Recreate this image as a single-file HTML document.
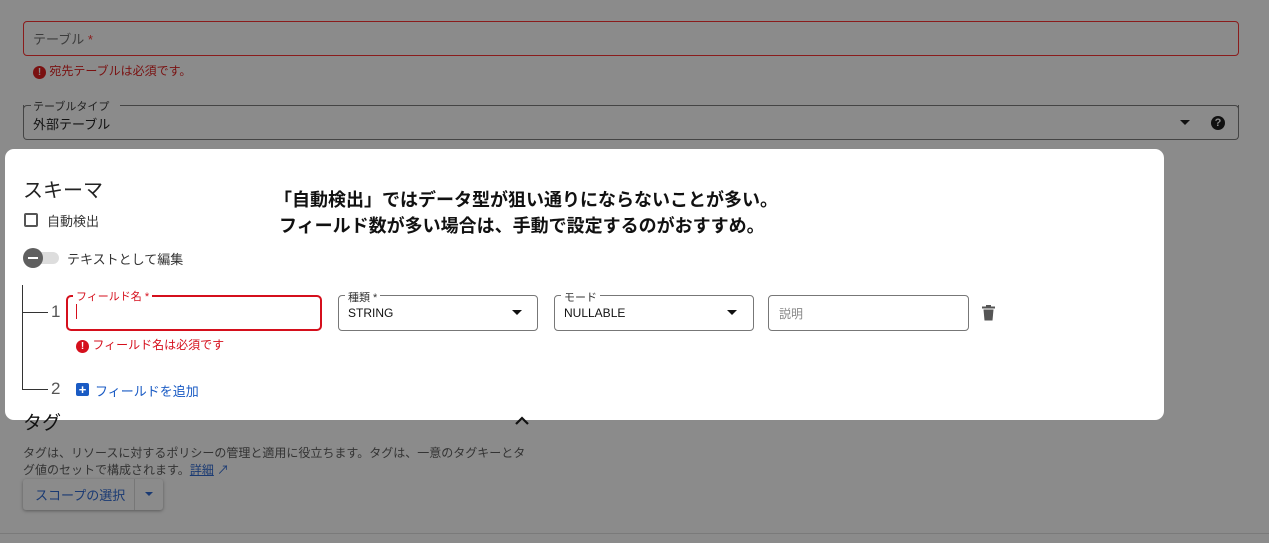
<!DOCTYPE html>
<html><head><meta charset="utf-8"><style>
*{box-sizing:border-box;margin:0;padding:0}
body{width:1269px;height:543px;background:#8b8b8b;font-family:"Liberation Sans","Noto Sans CJK JP",sans-serif;position:relative;overflow:hidden;color:#1f1f1f}
.a{position:absolute;white-space:nowrap}
.box{position:absolute;border:1px solid;border-radius:4px}
.ic{display:inline-block;width:13px;height:13px;border-radius:50%;font-size:10px;text-align:center;line-height:13px;font-weight:bold;vertical-align:0px}
</style></head><body>
<div class="box" style="left:23px;top:21px;width:1216px;height:35px;border-color:#8a1c1c"></div>
<div class="a" style="left:33px;top:29px;font-size:13px;color:#3c3c3c">テーブル <span style="color:#8a1c1c">*</span></div>
<div class="a" style="left:33px;top:62px;font-size:12px;color:#7a1111"><span class="ic" style="background:#7a1111;color:#8b8b8b">!</span> 宛先テーブルは必須です。</div>
<div class="box" style="left:23px;top:105px;width:1216px;height:35px;border-color:#444;border-top:none;border-radius:0 0 4px 4px"></div>
<div class="a" style="left:23px;top:105px;width:8px;height:6px;border-left:1px solid #444;border-top:1px solid #444;border-radius:4px 0 0 0"></div>
<div class="a" style="left:120px;top:105px;width:1119px;height:6px;border-right:1px solid #444;border-top:1px solid #444;border-radius:0 4px 0 0"></div>
<div class="a" style="left:33px;top:98px;font-size:11px;color:#222">テーブルタイプ</div>
<div class="a" style="left:33px;top:114px;font-size:13px;color:#111">外部テーブル</div>
<div class="a" style="left:1180px;top:120px;border:5px solid transparent;border-top:5px solid #111"></div>
<div class="a" style="left:1211px;top:116px;width:14px;height:14px;border-radius:50%;background:#111;color:#8b8b8b;font-size:11px;font-weight:bold;text-align:center;line-height:14px">?</div>

<div class="a" style="left:5px;top:149px;width:1159px;height:271px;background:#fff;border-radius:9px"></div>
<div class="a" style="left:23px;top:174px;font-size:20px;color:#222">スキーマ</div>
<div class="a" style="left:274px;top:187px;font-size:18px;font-weight:bold;color:#111;line-height:26px">「自動検出」ではデータ型が狙い通りにならないことが多い。<br>&nbsp;フィールド数が多い場合は、手動で設定するのがおすすめ。</div>
<div class="a" style="left:24px;top:213px;width:14px;height:14px;border:2px solid #555;border-radius:2px"></div>
<div class="a" style="left:47px;top:211px;font-size:13px;color:#333">自動検出</div>
<div class="a" style="left:26px;top:252px;width:33px;height:12px;background:#ddd;border-radius:6px"></div>
<div class="a" style="left:23px;top:248px;width:20px;height:20px;border-radius:50%;background:#5f5f5f"></div>
<div class="a" style="left:28px;top:257px;width:10px;height:2px;background:#fff"></div>
<div class="a" style="left:67px;top:249px;font-size:13px;color:#333">テキストとして編集</div>
<div class="a" style="left:22px;top:285px;width:1px;height:104px;background:#333"></div>
<div class="a" style="left:22px;top:312px;width:26px;height:1px;background:#333"></div>
<div class="a" style="left:22px;top:389px;width:26px;height:1px;background:#333"></div>
<div class="a" style="left:51px;top:302px;font-size:17px;color:#555">1</div>
<div class="a" style="left:51px;top:379px;font-size:17px;color:#555">2</div>
<div class="box" style="left:66px;top:295px;width:256px;height:36px;border:2.5px solid #d50f1c;border-radius:5px"></div>
<div class="a" style="left:73px;top:288px;background:#fff;padding:0 3px;font-size:11px;color:#d50f1c">フィールド名 *</div>
<div class="a" style="left:76px;top:304px;width:1px;height:15px;background:#d50f1c"></div>
<div class="a" style="left:76px;top:336px;font-size:12px;color:#d50f1c"><span class="ic" style="background:#d50f1c;color:#fff">!</span> フィールド名は必須です</div>
<div class="box" style="left:338px;top:295px;width:200px;height:36px;border-color:#777"></div>
<div class="a" style="left:345px;top:289px;background:#fff;padding:0 3px;font-size:11px;color:#333">種類 *</div>
<div class="a" style="left:348px;top:306px;font-size:12px;color:#111">STRING</div>
<div class="a" style="left:512px;top:310px;border:5px solid transparent;border-top:5px solid #111"></div>
<div class="box" style="left:554px;top:295px;width:200px;height:36px;border-color:#777"></div>
<div class="a" style="left:561px;top:289px;background:#fff;padding:0 3px;font-size:11px;color:#333">モード</div>
<div class="a" style="left:564px;top:306px;font-size:12px;color:#111">NULLABLE</div>
<div class="a" style="left:727px;top:310px;border:5px solid transparent;border-top:5px solid #111"></div>
<div class="box" style="left:768px;top:295px;width:201px;height:36px;border-color:#777"></div>
<div class="a" style="left:779px;top:305px;font-size:12px;color:#888">説明</div>
<svg class="a" style="left:982px;top:305px" width="13" height="16" viewBox="0 0 13 16"><rect x="0" y="1.5" width="13" height="2" fill="#555"/><rect x="4" y="0" width="5" height="2" fill="#555"/><path d="M1.5 4.5h10l-1 11h-8z" fill="#555"/></svg>
<div class="a" style="left:76px;top:383px;width:13px;height:13px;background:#1a5bc4;border-radius:2px;color:#fff;font-size:13px;font-weight:bold;line-height:13px;text-align:center">+</div>
<div class="a" style="left:95px;top:381px;font-size:13px;color:#1a5bc4">フィールドを追加</div>

<div class="a" style="left:23px;top:408px;font-size:19px;color:#111">タグ</div>
<svg class="a" style="left:515px;top:416px" width="14" height="9" viewBox="0 0 14 9"><path d="M1 8L7 2l6 6" stroke="#111" stroke-width="2.2" fill="none"/></svg>
<div class="a" style="left:23px;top:445px;font-size:12px;color:#333;line-height:17px">タグは、リソースに対するポリシーの管理と適用に役立ちます。タグは、一意のタグキーとタ<br>グ値のセットで構成されます。<span style="color:#1a3a73;text-decoration:underline">詳細</span> <span style="color:#1a3a73">↗</span></div>
<div class="a" style="left:23px;top:479px;width:140px;height:31px;border-radius:3px;box-shadow:0 1px 3px rgba(0,0,0,.35)"></div>
<div class="a" style="left:134px;top:479px;width:1px;height:31px;background:#777"></div>
<div class="a" style="left:35px;top:485px;font-size:13px;color:#1a3a73">スコープの選択</div>
<div class="a" style="left:145px;top:492px;border:4px solid transparent;border-top:4px solid #1a3a73"></div>
<div class="a" style="left:0;top:533px;width:1269px;height:1px;background:#7a7a7a"></div>
</body></html>
